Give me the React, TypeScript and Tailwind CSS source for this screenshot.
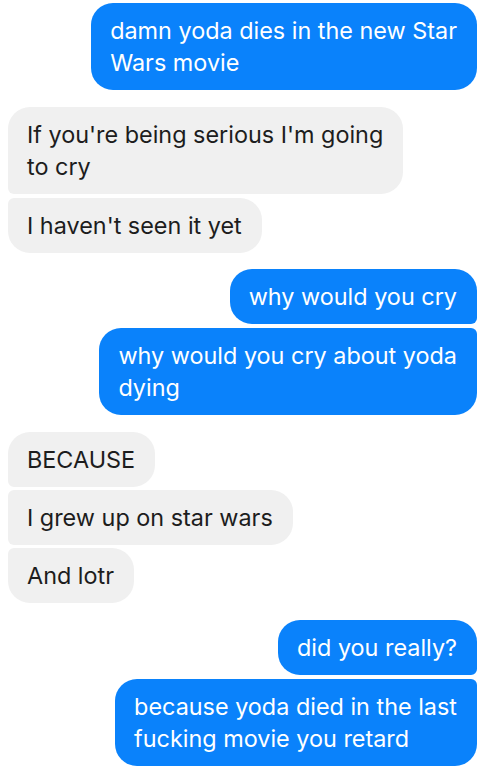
type Msg = { lines: string[]; mine: boolean; corners: string; gap: string }

const messages: Msg[] = [
  { lines: ["damn yoda dies in the new Star", "Wars movie"], mine: true, corners: "rounded-[22px]", gap: "mt-[3px]" },
  { lines: ["If you're being serious I'm going", "to cry"], mine: false, corners: "rounded-[22px] rounded-bl-[6px]", gap: "mt-[17px]" },
  { lines: ["I haven't seen it yet"], mine: false, corners: "rounded-[22px] rounded-tl-[6px]", gap: "mt-[4px]" },
  { lines: ["why would you cry"], mine: true, corners: "rounded-[22px] rounded-br-[6px]", gap: "mt-[16px]" },
  { lines: ["why would you cry about yoda", "dying"], mine: true, corners: "rounded-[22px] rounded-tr-[6px]", gap: "mt-[4px]" },
  { lines: ["BECAUSE"], mine: false, corners: "rounded-[22px] rounded-bl-[6px]", gap: "mt-[17px]" },
  { lines: ["I grew up on star wars"], mine: false, corners: "rounded-[22px] rounded-l-[6px]", gap: "mt-[3px]" },
  { lines: ["And lotr"], mine: false, corners: "rounded-[22px] rounded-tl-[6px]", gap: "mt-[3px]" },
  { lines: ["did you really?"], mine: true, corners: "rounded-[22px] rounded-br-[6px]", gap: "mt-[17px]" },
  { lines: ["because yoda died in the last", "fucking movie you retard"], mine: true, corners: "rounded-[22px] rounded-tr-[6px]", gap: "mt-[4px]" },
]

function Bubble({ msg }: { msg: Msg }) {
  const side = msg.mine
    ? "self-end mr-[3px] bg-[#0a82fb] text-white"
    : "self-start ml-[8px] bg-[#f0f0f0] text-[#1d1d1d]"
  return (
    <div className={`${msg.gap} ${side} ${msg.corners} pl-[19px] pr-[20px] pt-[12px] pb-[11px] text-[23.4px] leading-[32px] whitespace-nowrap`}>
      {msg.lines.map((l, i) => (
        <div key={i}>{l}</div>
      ))}
    </div>
  )
}

export default function App() {
  return (
    <div className="w-[480px] h-[778px] bg-white overflow-hidden flex flex-col font-['Inter',sans-serif]">
      {messages.map((m, i) => (
        <Bubble key={i} msg={m} />
      ))}
    </div>
  )
}
